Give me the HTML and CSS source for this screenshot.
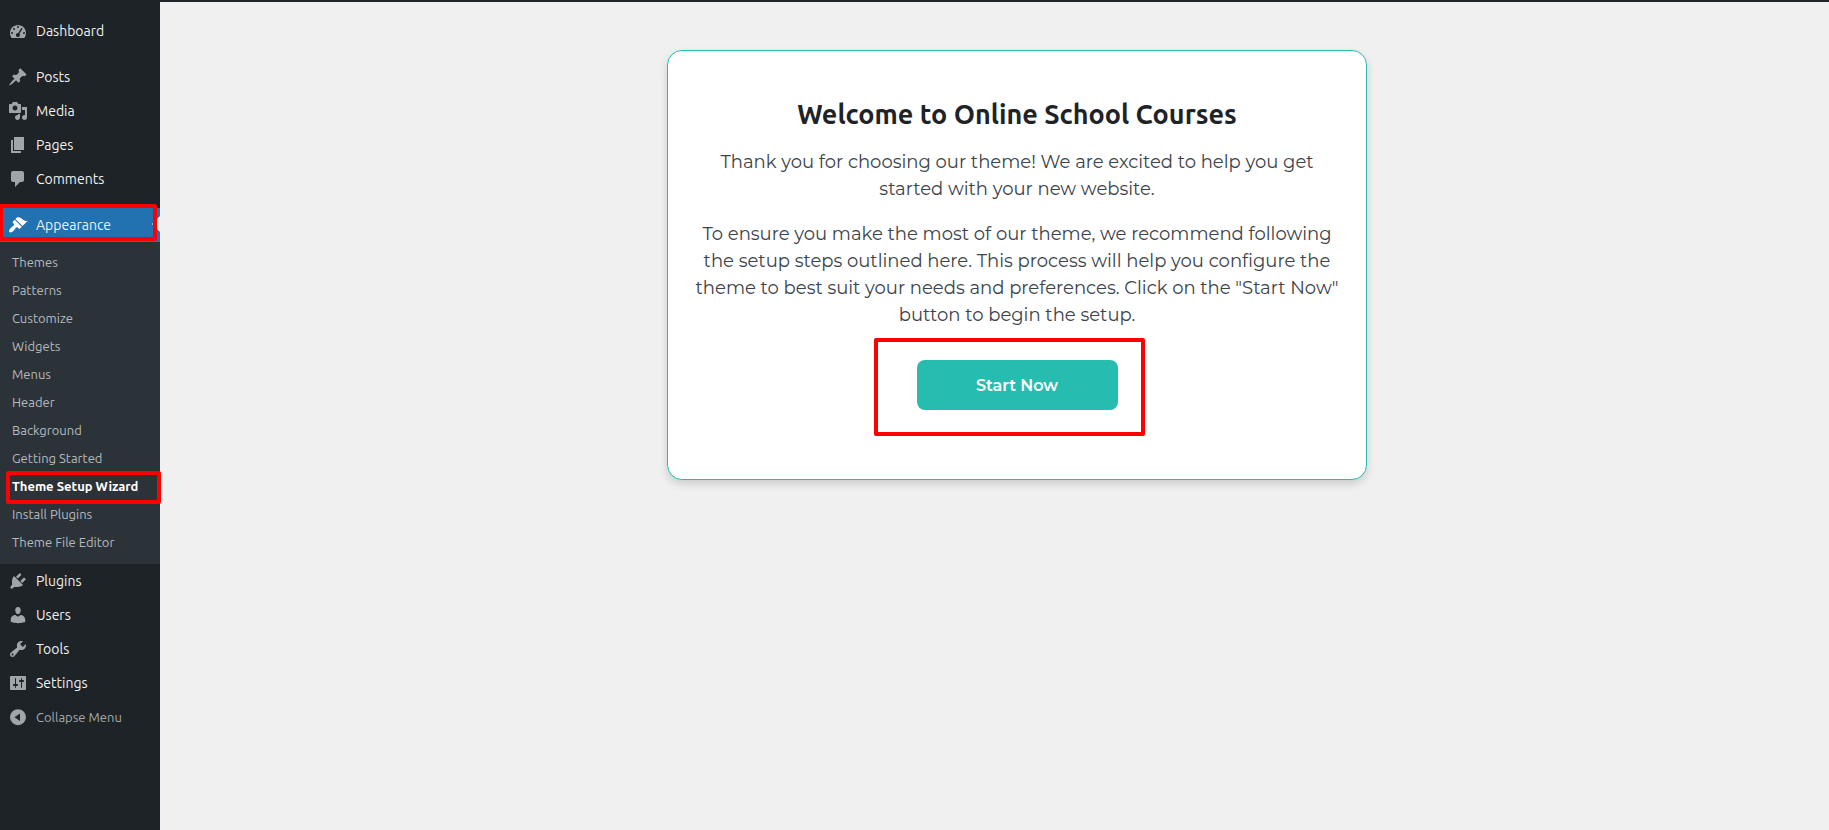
FILE: index.html
```
<!DOCTYPE html>
<html lang="en">
<head>
  <meta charset="UTF-8" />
  <meta name="viewport" content="width=device-width, initial-scale=1" />
  <title>Theme Setup Wizard</title>
  <link rel="stylesheet" href="styles.css">
</head>
<body>
  <div class="topbar"></div>
  <div class="layout">
    <nav class="sidebar">
      <ul class="menu">
        <li><a href="#"><svg viewBox="0 0 20 20"><path fill-rule="evenodd" d="M3.76 17h12.48A7.95 7.95 0 0 0 18 12c0-4.41-3.58-8-8-8s-8 3.59-8 8c0 1.9.66 3.65 1.76 5zM9 6a1 1 0 1 1 2 0 1 1 0 0 1-2 0zM5 8a1 1 0 1 1 2 0 1 1 0 0 1-2 0zM3 12a1 1 0 1 1 2 0 1 1 0 0 1-2 0zM15 12a1 1 0 1 1 2 0 1 1 0 0 1-2 0zM14.3 7.2c.3.3.2.9-.1 1.2l-2.7 4.2c.6.9.6 2-.2 2.8-.8.8-2 .8-2.8 0s-.8-2 0-2.8c.5-.5 1.1-.7 1.7-.6l3-4.7c.3-.4.8-.4 1.1-.1z"/></svg>Dashboard</a></li>
        <li class="separator"></li>
        <li><a href="#"><svg viewBox="0 0 20 20"><path d="M10.44 3.02l1.82-1.82 6.36 6.35-1.83 1.82c-1.05-.68-2.48-.57-3.41.36l-.75.75c-.92.93-1.04 2.35-.35 3.41l-1.83 1.82-2.41-2.41-2.8 2.79c-.42.42-3.38 2.71-3.8 2.29s1.86-3.39 2.28-3.81l2.79-2.79L4.1 9.36l1.83-1.82c1.05.69 2.48.57 3.4-.36l.75-.75c.93-.92 1.05-2.35.36-3.41z"/></svg>Posts</a></li>
        <li><a href="#"><svg viewBox="0 0 20 20"><path fill-rule="evenodd" d="M13 11V4c0-.55-.45-1-1-1h-1.67L9 1H5L3.67 3H2c-.55 0-1 .45-1 1v7c0 .55.45 1 1 1h10c.55 0 1-.45 1-1zM7 4.5c1.38 0 2.5 1.12 2.5 2.5S8.38 9.5 7 9.5 4.5 8.38 4.5 7 5.62 4.5 7 4.5zM14 6h5v10.5c0 1.38-1.12 2.5-2.5 2.5S14 17.88 14 16.5s1.12-2.5 2.5-2.5c.17 0 .34.02.5.05V9h-3V6zm-4 8.05V13h2v3.5c0 1.38-1.12 2.5-2.5 2.5S7 17.88 7 16.5 8.12 14 9.5 14c.17 0 .34.02.5.05z"/></svg>Media</a></li>
        <li><a href="#"><svg viewBox="0 0 20 20"><path d="M6 15V2h10v13H6zm-1 1h8v2H3V5h2v11z"/></svg>Pages</a></li>
        <li><a href="#"><svg viewBox="0 0 20 20"><path d="M5 2h9c1.1 0 2 .9 2 2v7c0 1.1-.9 2-2 2h-2l-5 5v-5H5c-1.1 0-2-.9-2-2V4c0-1.1.9-2 2-2z"/></svg>Comments</a></li>
        <li class="separator"></li>
        <li class="current">
          <a href="#"><svg viewBox="0 0 20 20"><path d="M14.48 11.06L7.41 3.99l1.5-1.5c.5-.56 2.3-.47 3.51.32 1.21.8 1.43 1.28 2.91 2.1 1.18.64 2.45 1.26 4.45.85zm-.71.71L6.7 4.7 4.93 6.47c-.39.39-.39 1.02 0 1.41l1.06 1.06c.39.39.39 1.03 0 1.42-.6.6-1.43 1.11-2.21 1.69-.35.26-.7.53-1.01.84C1.43 14.23.4 16.08 1.4 17.07c.99 1 2.84-.03 4.18-1.36.31-.31.58-.66.85-1.02.57-.78 1.08-1.61 1.69-2.21.39-.39 1.02-.39 1.41 0l1.06 1.06c.39.39 1.02.39 1.41 0z"/></svg>Appearance</a>
          <ul class="submenu">
            <li><a href="#">Themes</a></li>
            <li><a href="#">Patterns</a></li>
            <li><a href="#">Customize</a></li>
            <li><a href="#">Widgets</a></li>
            <li><a href="#">Menus</a></li>
            <li><a href="#">Header</a></li>
            <li><a href="#">Background</a></li>
            <li><a href="#">Getting Started</a></li>
            <li class="active"><a href="#">Theme Setup Wizard</a></li>
            <li><a href="#">Install Plugins</a></li>
            <li><a href="#">Theme File Editor</a></li>
          </ul>
        </li>
        <li><a href="#"><svg viewBox="0 0 20 20"><path d="M13.11 4.36L9.87 7.6 8 5.73l3.24-3.24c.35-.34 1.05-.2 1.56.32.52.51.66 1.21.31 1.55zm-8 1.77l.91-1.12 9.01 9.01-1.19.84c-.71.71-2.63 1.16-3.82 1.16H6.14L4.9 17.26c-.59.59-1.54.59-2.12 0-.59-.58-.59-1.53 0-2.12l1.24-1.24v-3.88c0-1.13.4-3.19 1.09-3.89zm7.26 3.97l3.24-3.24c.34-.35 1.04-.21 1.55.31.52.51.66 1.21.31 1.55l-3.24 3.25z"/></svg>Plugins</a></li>
        <li><a href="#"><svg viewBox="0 0 20 20"><path d="M10 9.25c-2.27 0-2.73-3.44-2.73-3.44C7 4.02 7.82 2 9.97 2c2.16 0 2.98 2.02 2.71 3.81 0 0-.41 3.44-2.68 3.44zm0 2.57L12.72 10c2.39 0 4.52 2.33 4.52 4.53v2.49s-3.65 1.13-7.24 1.13c-3.65 0-7.24-1.13-7.24-1.13v-2.49c0-2.25 1.94-4.48 4.47-4.48z"/></svg>Users</a></li>
        <li><a href="#"><svg viewBox="0 0 20 20"><path fill-rule="evenodd" d="M16.68 9.77c-1.34 1.34-3.3 1.67-4.95.99l-5.41 6.52c-.99.99-2.59.99-3.58 0s-.99-2.59 0-3.57l6.52-5.42c-.68-1.65-.35-3.61.99-4.95 1.28-1.28 3.12-1.62 4.72-1.06l-2.89 2.89 2.82 2.82 2.86-2.87c.53 1.58.18 3.39-1.08 4.65zM3.81 16.21c.4.39 1.04.39 1.43 0 .4-.4.4-1.04 0-1.43-.39-.4-1.03-.4-1.43 0-.39.39-.39 1.03 0 1.43z"/></svg>Tools</a></li>
        <li><a href="#"><svg viewBox="0 0 20 20"><path fill-rule="evenodd" d="M18 16V4c0-.55-.45-1-1-1H3c-.55 0-1 .45-1 1v12c0 .55.45 1 1 1h14c.55 0 1-.45 1-1zM8 11h1c.55 0 1 .45 1 1s-.45 1-1 1H8v1.5c0 .28-.22.5-.5.5s-.5-.22-.5-.5V13H6c-.55 0-1-.45-1-1s.45-1 1-1h1V5.5c0-.28.22-.5.5-.5s.5.22.5.5V11zm5-2h-1c-.55 0-1-.45-1-1s.45-1 1-1h1V5.5c0-.28.22-.5.5-.5s.5.22.5.5V7h1c.55 0 1 .45 1 1s-.45 1-1 1h-1v5.5c0 .28-.22.5-.5.5s-.5-.22-.5-.5V9z"/></svg>Settings</a></li>
        <li><button type="button" class="collapse"><svg viewBox="0 0 20 20"><path fill-rule="evenodd" d="M10 2.2a8 8 0 1 0 0 16 8 8 0 0 0 0-16zM12 6.5v7.4L6.5 10.2z"/></svg>Collapse Menu</button></li>
      </ul>
    </nav>

    <main class="content">
      <section class="card">
        <h1>Welcome to Online School Courses</h1>
        <p>Thank you for choosing our theme! We are excited to help you get started with your new website.</p>
        <p>To ensure you make the most of our theme, we recommend following the setup steps outlined here. This process will help you configure the theme to best suit your needs and preferences. Click on the "Start Now" button to begin the setup.</p>
        <div class="action">
          <button type="button" class="start">Start Now</button>
        </div>
      </section>
    </main>
  </div>
</body>
</html>
```
FILE: styles.css
```
* {
  box-sizing: border-box;
}
body {
  margin: 0;
  min-height: 100vh;
  display: flex;
  flex-direction: column;
  background: #f0f0f0;
  font-family: Ubuntu, "Noto Sans", sans-serif;
}
ul {
  list-style: none;
  margin: 0;
  padding: 0;
}
.topbar {
  height: 2px;
  background: #1d2327;
}
.layout {
  flex: 1;
  display: flex;
}

/* admin menu */
.sidebar {
  flex: none;
  width: 160px;
  padding-top: 12px;
  background: #1d2327;
}
.menu > li > a,
.collapse {
  display: flex;
  align-items: center;
  gap: 8px;
  height: 34px;
  padding-left: 8px;
  color: #f0f0f1;
  font-size: 14px;
  text-decoration: none;
}
.menu svg {
  width: 20px;
  height: 20px;
  fill: #a0a5aa;
}
.menu .separator {
  height: 12px;
}
.menu .collapse {
  width: 100%;
  border: 0;
  background: none;
  color: #a7aaad;
  font-family: inherit;
  font-size: 13px;
  cursor: pointer;
}
.current > a {
  position: relative;
  background: #2271b1;
}
.menu .current svg {
  fill: #fff;
}
.current > a::before {
  content: "";
  position: absolute;
  right: 0;
  top: 8px;
  border: 8px solid transparent;
  border-right-color: #f0f0f1;
}
.submenu {
  padding: 6px 0 8px;
  background: #2c3338;
}
.submenu a {
  display: block;
  padding-left: 12px;
  line-height: 28px;
  font-size: 13px;
  color: #b4b9be;
  text-decoration: none;
}
.submenu .active {
  position: relative;
}
.submenu .active a {
  color: #fff;
  font-weight: bold;
}

/* red highlight boxes */
.current > a::after,
.active::after,
.action::after {
  content: "";
  position: absolute;
  border: 4px solid #f00;
  border-radius: 2px;
}
.current > a::after {
  inset: -4px 3px 1px -1px;
}
.active::after {
  inset: -1px -1px -4px 6px;
}

/* welcome card */
.content {
  flex: 1;
  padding: 48px 0 48px 45px;
}
.card {
  max-width: 700px;
  margin: 0 auto;
  padding: 42px 20px 69px;
  border: 1px solid #26bdb0;
  border-radius: 15px;
  background: #fff;
  box-shadow: 0 4px 8px rgba(0, 0, 0, 0.15);
  text-align: center;
}
.card h1 {
  margin: 0 0 14px;
  color: #1d2327;
  font-size: 27px;
  font-weight: 600;
  line-height: 42px;
}
.card p {
  margin: 0 0 18px;
  color: #3c434a;
  font-family: Montserrat, Inter, sans-serif;
  font-size: 18px;
  line-height: 27px;
}
.action {
  position: relative;
  width: 201px;
  margin: 31px auto 0;
}
.action::after {
  inset: -22px -27px -26px -43px;
  pointer-events: none;
}
.start {
  width: 100%;
  height: 50px;
  border: 0;
  border-radius: 8px;
  background: #26bdb0;
  color: #fff;
  font-family: Montserrat, Inter, sans-serif;
  font-size: 16px;
  font-weight: 600;
  cursor: pointer;
}
```
